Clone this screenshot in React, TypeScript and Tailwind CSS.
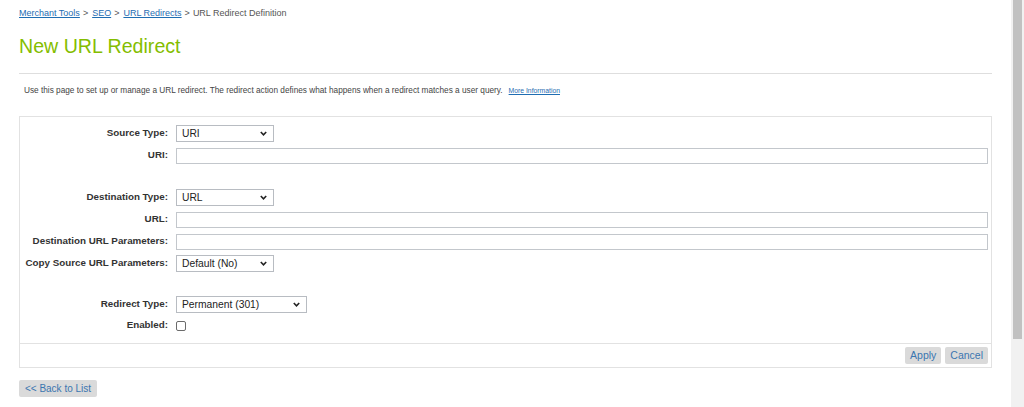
import React from "react";

const Chevron = () => (
  <svg width="7" height="5" viewBox="0 0 7 5" className="pointer-events-none">
    <path d="M0.8 1 L3.5 3.8 L6.2 1" fill="none" stroke="#222" strokeWidth="1.6" />
  </svg>
);

function Select({ value, width }: { value: string; width: string }) {
  return (
    <div
      className={`flex h-[17px] ${width} items-center justify-between border border-[#b8bcc2] bg-white pl-[5px] pr-[6px] text-[10.3px] leading-[15px] text-[#222]`}
    >
      <span className="pt-[1px]">{value}</span>
      <Chevron />
    </div>
  );
}

function TextInput() {
  return <div className="h-[16px] w-[812px] border border-[#c3c7cc] bg-white" />;
}

function Row({ label, children, h = "h-[22px]" }: { label: string; children: React.ReactNode; h?: string }) {
  return (
    <div className={`flex ${h} items-center`}>
      <div className="w-[148px] pr-0 text-right text-[9.8px] font-bold text-[#333]">{label}</div>
      <div className="ml-[8px] flex items-center">{children}</div>
    </div>
  );
}

export default function App() {
  return (
    <div className="flex h-[407px] w-[1024px] overflow-hidden bg-white font-['Liberation_Sans',Arial,sans-serif]">
      <div className="flex-1 pl-[19px] pr-[19px]">
        <div className="mt-[8px] flex h-[11px] items-center text-[9px] text-[#555]">
          <a className="text-[#1f6db2] underline">Merchant Tools</a>
          <span className="ml-[3px] mr-[4px]">&gt;</span>
          <a className="text-[#1f6db2] underline">SEO</a>
          <span className="ml-[3px] mr-[4px]">&gt;</span>
          <a className="text-[#1f6db2] underline">URL Redirects</a>
          <span className="ml-[3px] mr-[3px]">&gt;</span>
          <span>URL Redirect Definition</span>
        </div>
        <div className="mt-[17px] flex h-[22px] items-center text-[19.6px] text-[#84bd00]">New URL Redirect</div>
        <div className="mt-[15px] border-t border-[#dedede]" />
        <div className="mt-[12px] flex h-[10px] items-center pl-[5px] text-[8.25px] text-[#444]">
          <span>
            Use this page to set up or manage a URL redirect. The redirect action defines what happens when a redirect
            matches a user query.
          </span>
          <a className="ml-[6px] text-[6.8px] text-[#1f6db2] underline">More Information</a>
        </div>
        <div className="mt-[20px] border border-[#e2e2e2] bg-white">
          <div className="pt-[5px]">
            <Row label="Source Type:">
              <Select value="URI" width="w-[98px]" />
            </Row>
            <Row label="URI:" h="h-[23px]">
              <TextInput />
            </Row>
            <div className="h-[19px]" />
            <Row label="Destination Type:">
              <Select value="URL" width="w-[98px]" />
            </Row>
            <Row label="URL:" h="h-[23px]">
              <TextInput />
            </Row>
            <Row label="Destination URL Parameters:" h="h-[21px]">
              <TextInput />
            </Row>
            <Row label="Copy Source URL Parameters:">
              <Select value="Default (No)" width="w-[98px]" />
            </Row>
            <div className="h-[19px]" />
            <Row label="Redirect Type:">
              <Select value="Permanent (301)" width="w-[131px]" />
            </Row>
            <Row label="Enabled:" h="h-[21px]">
              <div className="h-[10px] w-[10px] rounded-[2px] border border-[#6b6b6b] bg-white" />
            </Row>
            <div className="h-[7px]" />
          </div>
          <div className="flex h-[24px] items-center justify-end gap-[4px] border-t border-[#e2e2e2] pr-[3px]">
            <button className="flex h-[17px] items-center rounded-[2px] bg-[#dadada] px-[5px] text-[10.5px] text-[#3a76b0]">
              Apply
            </button>
            <button className="flex h-[17px] items-center rounded-[2px] bg-[#dadada] px-[5px] text-[10.5px] text-[#3a76b0]">
              Cancel
            </button>
          </div>
        </div>
        <button className="mt-[12px] flex h-[17px] w-[78px] items-center justify-center rounded-[2px] bg-[#dadada] text-[10px] text-[#3a76b0]">
          &lt;&lt; Back to List
        </button>
      </div>
      <div className="w-[13px] bg-[#f1f1f1] pt-0">
        <div className="ml-[2px] h-[339px] w-[9px] bg-[#c1c1c1]" />
      </div>
    </div>
  );
}
